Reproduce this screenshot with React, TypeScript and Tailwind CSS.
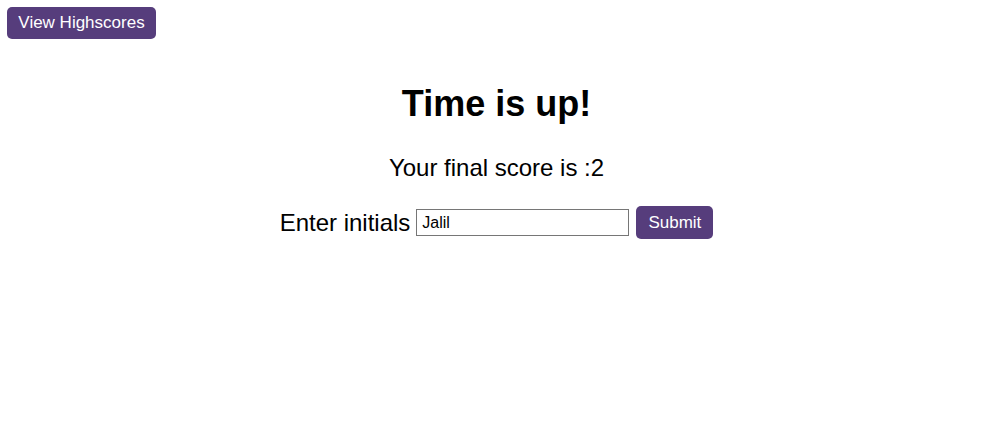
export default function App() {
	return (
		<div className="min-h-screen bg-white text-black font-['Liberation_Sans',Arial,sans-serif]">
			<div className="p-[7px]">
				<button className="h-8 w-[149px] rounded-[5px] bg-[#563d7c] text-[17px] text-white">
					View Highscores
				</button>
			</div>
			<div className="flex flex-col items-center">
				<h1 className="mt-[35px] text-[36px] font-bold leading-[45px]">Time is up!</h1>
				<p className="mt-[28px] text-[24px] leading-[27px]">Your final score is :2</p>
				<div className="mt-[25px] flex items-center">
					<span className="text-[24px] leading-[27px]">Enter initials</span>
					<input
						defaultValue="Jalil"
						className="ml-[6px] h-[27px] w-[213px] border border-[#767676] px-[5px] text-[16px] text-black outline-none"
					/>
					<button className="ml-[7px] h-[33px] w-[77px] rounded-[5px] bg-[#563d7c] text-[17px] text-white">
						Submit
					</button>
				</div>
			</div>
		</div>
	)
}
